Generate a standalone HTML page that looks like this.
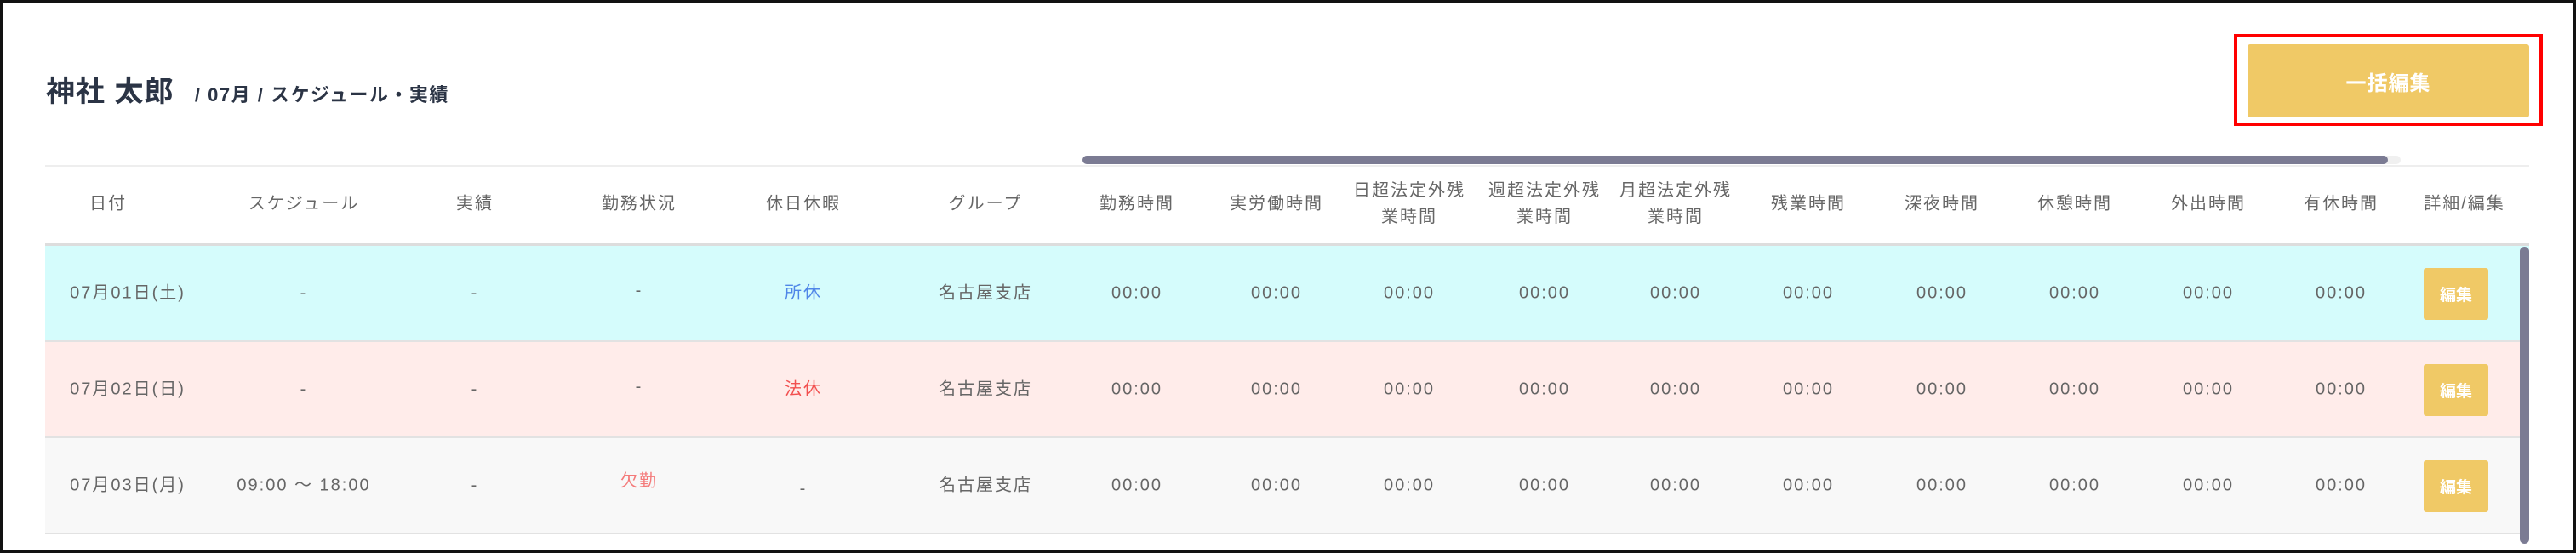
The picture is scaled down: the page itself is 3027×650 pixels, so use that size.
<!DOCTYPE html>
<html><head><meta charset="utf-8"><style>
*{margin:0;padding:0;box-sizing:border-box}
html,body{width:3027px;height:650px;overflow:hidden;background:#fff}
body{position:relative;font-family:"Liberation Sans","Noto Sans CJK JP",sans-serif;color:#666}
.frame{position:absolute;left:0;top:0;width:3027px;height:650px;border:4px solid #111}
.t{position:absolute;white-space:nowrap;transform:translate(-50%,-50%);font-size:20px;text-align:center;line-height:31px;letter-spacing:2px}
.row{position:absolute;left:53px;width:2919px;height:113px;border-bottom:2px solid #e2e2e2}
.btn{position:absolute;left:2848px;width:76px;height:61px;background:#f0c966;border-radius:3px;color:#fff;font-weight:bold;font-size:19px;display:flex;align-items:center;justify-content:center}
</style></head><body>
<div class="frame"></div>
<div style="position:absolute;left:54px;top:80px;font-size:34px;font-weight:bold;color:#2b3445;white-space:nowrap;letter-spacing:1px">神社 太郎 <span style="font-size:22px;margin-left:14px;letter-spacing:1.5px">/ 07月 / スケジュール・実績</span></div>
<div style="position:absolute;left:2625px;top:40px;width:363px;height:108px;border:4px solid #f00"></div>
<div style="position:absolute;left:2641px;top:52px;width:331px;height:86px;background:#f0c966;border-radius:3px;color:#fff;font-weight:bold;font-size:24px;display:flex;align-items:center;justify-content:center;letter-spacing:1px">一括編集</div>
<div style="position:absolute;left:1272px;top:183px;width:1549px;height:10px;background:#f0f0f0;border-radius:5px"></div>
<div style="position:absolute;left:1272px;top:183px;width:1534px;height:10px;background:#7b7b93;border-radius:5px"></div>
<div style="position:absolute;left:53px;top:194px;width:2919px;height:2px;background:#eee"></div>
<div style="position:absolute;left:53px;top:286px;width:2919px;height:3px;background:#ddd"></div>
<div class="row" style="top:289px;background:#d5fcfc"></div>
<div class="row" style="top:402px;background:#ffecea"></div>
<div class="row" style="top:515px;background:#f8f8f8"></div>
<div style="position:absolute;left:2961px;top:290px;width:11px;height:349px;background:#7b7b93;border-radius:6px"></div>
<div id="c"></div>
<script>
var xs=[127,357,558,751,944,1158,1336,1500,1656,1815,1969,2125,2282,2438,2595,2751,2896];
var hd=["日付","スケジュール","実績","勤務状況","休日休暇","グループ","勤務時間","実労働時間","日超法定外残<br>業時間","週超法定外残<br>業時間","月超法定外残<br>業時間","残業時間","深夜時間","休憩時間","外出時間","有休時間","詳細/編集"];
var h="";
hd.forEach(function(t,i){h+='<div class="t" style="left:'+xs[i]+'px;top:240px">'+t+'</div>';});
var rows=[
["07月01日(土)","-","-","-",'<span style="color:#4f86e8">所休</span>',"名古屋支店"],
["07月02日(日)","-","-","-",'<span style="color:#f25050">法休</span>',"名古屋支店"],
["07月03日(月)","09:00 ～ 18:00","-",'<span style="color:#f47a7a">欠勤</span>',"-","名古屋支店"]];
var ys=[345,458,571];
rows.forEach(function(r,j){
 for(var i=0;i<16;i++){
  var v=i<6?r[i]:"00:00";
  var x=i==0?150:xs[i];
  var y=ys[j]; if(i==3&&j<2)y-=3; if(i==3&&j==2)y-=5; if(i==4&&j==2)y+=4;
  h+='<div class="t" style="left:'+x+'px;top:'+y+'px">'+v+'</div>';
 }
 h+='<div class="btn" style="top:'+(ys[j]-30)+'px">編集</div>';
});
document.getElementById("c").innerHTML=h;
</script>
</body></html>
